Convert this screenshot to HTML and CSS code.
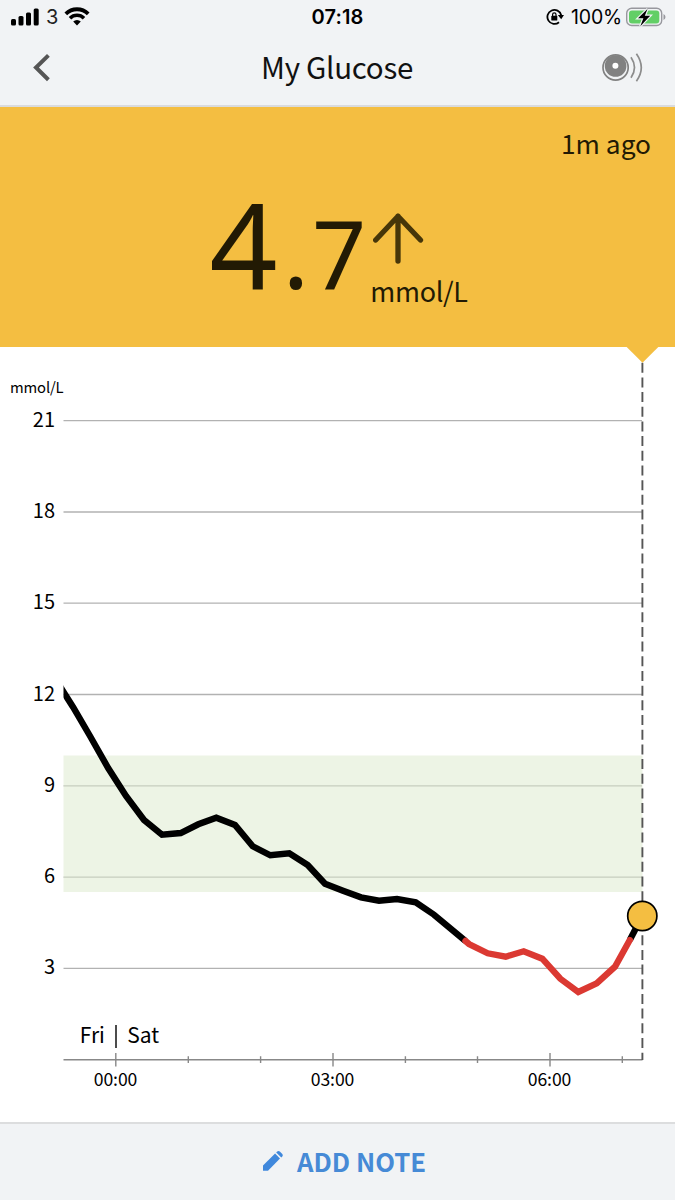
FILE: index.html
```html
<!DOCTYPE html>
<html lang="en">
	<head>
		<meta charset="utf-8">
		<meta name="viewport" content="width=device-width, initial-scale=1">
		<title>My Glucose</title>
		<link rel="stylesheet" href="styles.css">
	</head>
	<body>
		<!-- status bar -->
		<div class="status-bar">
			<div class="status-left">
				<svg class="icon-signal" width="28" height="18" viewBox="0 0 28 18">
					<rect x="0" y="11" width="5" height="6.5" rx="1.5"/>
					<rect x="7.5" y="8" width="5" height="9.5" rx="1.5"/>
					<rect x="15" y="4.5" width="5" height="13" rx="1.5"/>
					<rect x="22.7" y="0.5" width="5" height="17" rx="1.5"/>
				</svg>
				<span class="carrier">3</span>
				<svg class="icon-wifi" width="26" height="19" viewBox="0 0 26 19">
					<path d="M1.8 6.9a15.8 15.8 0 0 1 22.4 0" fill="none" stroke="#000" stroke-width="3.8"/>
					<path d="M6 11.2a9.9 9.9 0 0 1 14 0" fill="none" stroke="#000" stroke-width="3.5"/>
					<path d="M13 18.4l-3.8-3.9a5.4 5.4 0 0 1 7.6 0z"/>
				</svg>
			</div>
			<div class="status-time">07:18</div>
			<div class="status-right">
				<svg class="icon-lock" width="18" height="18" viewBox="0 0 18 18">
					<path d="M13 14.2A7 7 0 1 1 15.2 7.2" fill="none" stroke="#000" stroke-width="1.8"/>
					<path d="M11.8 7h6.2l-2.8 4.3z"/>
					<rect x="5.3" y="7.8" width="6" height="4.8" rx="0.7"/>
					<path d="M6.6 8V6.5a1.7 1.7 0 0 1 3.4 0V8" fill="none" stroke="#000" stroke-width="1.2"/>
				</svg>
				<span class="battery-text">100%</span>
				<svg class="icon-battery" width="41" height="22" viewBox="0 0 41 22">
					<rect x="0.7" y="2.2" width="35" height="17.3" rx="5" fill="none" stroke="#98989e" stroke-width="1.4"/>
					<rect x="3" y="4.4" width="30.3" height="13" rx="3" fill="#62cf66"/>
					<path d="M37.5 8v6q2-1 2-3t-2-3z" fill="#98989e"/>
					<path d="M21.5 3L12 12.3h5.4l-3.1 7.9L24.2 9.8h-5.4z" stroke="#f1f3f5" stroke-width="2.4" paint-order="stroke"/>
				</svg>
			</div>
		</div>

		<!-- nav -->
		<div class="nav">
			<svg class="icon-back" width="20" height="30" viewBox="0 0 20 30">
				<path d="M16.4 3.4L4 15.5l12.4 12.2" fill="none" stroke="#555" stroke-width="4"/>
			</svg>
			<h1 class="nav-title">My Glucose</h1>
			<svg class="icon-sensor" width="42" height="32" viewBox="0 0 42 32">
				<circle cx="14.6" cy="16.5" r="12.6" fill="none" stroke="#818181" stroke-width="1.7"/>
				<circle cx="14.6" cy="15" r="10.8" fill="#818181"/>
				<circle cx="14.4" cy="14.8" r="3" fill="#fff"/>
				<path d="M30 6.2q7 10.3 0 20.6M35.4 2.7q9.8 14 0 27.6" fill="none" stroke="#8c8c8c" stroke-width="1.7"/>
			</svg>
		</div>

		<!-- current reading -->
		<div class="reading">
			<div class="reading-age">1m ago</div>
			<div class="reading-row">
				<div class="reading-value">4<span class="reading-dot">.</span><span class="reading-decimal">7</span></div>
				<div class="reading-side">
					<svg class="icon-trend" width="52" height="52" viewBox="0 0 52 52">
						<path d="M2.7 27L25 3.2 47.5 27M25 3.2V48" fill="none" stroke="#463609" stroke-width="5.3" stroke-linecap="round" stroke-linejoin="round"/>
					</svg>
					<div class="reading-unit">mmol/L</div>
				</div>
			</div>
		</div>

		<!-- chart -->
		<svg class="chart" width="675" height="775" viewBox="0 347 675 775">
			<g class="grid">
				<path d="M63.5 420.7H642M63.5 512H642M63.5 603.2H642M63.5 694.5H642M63.5 785.8H642M63.5 877.2H642M63.5 968.3H642"/>
			</g>
			<rect class="target" x="63.5" y="755.5" width="579" height="136.5"/>
			<g class="axis">
				<path d="M63.5 1059.7H642.5M115.8 1053V1066.5M333 1053V1066.5M550 1053V1066.5"/>
				<path d="M188.3 1056.3V1063M260.6 1056.3V1063M405.4 1056.3V1063M477.5 1056.3V1063M622.3 1056.3V1063"/>
			</g>
			<text class="unit" x="10" y="393">mmol/L</text>
			<g class="y-labels">
				<text x="55" y="426.7">21</text>
				<text x="55" y="518">18</text>
				<text x="55" y="609.2">15</text>
				<text x="55" y="700.5">12</text>
				<text x="55" y="791.8">9</text>
				<text x="55" y="883">6</text>
				<text x="55" y="974.3">3</text>
			</g>
			<g class="x-labels">
				<text x="115.5" y="1086">00:00</text>
				<text x="332.5" y="1086">03:00</text>
				<text x="549.5" y="1086">06:00</text>
			</g>
			<text class="day" x="79.8" y="1042.5">Fri</text>
			<path d="M116 1025V1048" stroke="#111" stroke-width="1.5"/>
			<text class="day" x="127.3" y="1042.5">Sat</text>

			<path class="now" d="M642.4 362.7V1060"/>
			<path d="M625.7 346H659.3L642.5 362.7z" fill="#f4be41"/>

			<clipPath id="plot"><rect x="63.5" y="400" width="600" height="660"/></clipPath>
			<g class="trace" clip-path="url(#plot)">
				<polyline points="55,678 63.5,692 73,707 90,736 108.3,768.3 126,796 144,820 162,834.7 180.7,833 198.3,824.3 216.3,817.7 235,825 252.7,846.3 270.3,855.3 289.3,853.3 307.7,865 325,883.7 343,890.7 361,897.3 379,900.7 397,899 415.7,902.3 434,914.7 465.5,941"/>
				<polyline points="629.8,940 642.3,916"/>
				<polyline class="low" points="465.5,941 469,944 487.7,953.3 505.7,956.7 523.7,951.3 542.3,958.7 560.3,978.7 578.3,992 596.7,983.3 615,966.7 629.8,940"/>
			</g>
			<circle cx="642.3" cy="916" r="14.6" fill="#f4be41" stroke="#000" stroke-width="1.7"/>
		</svg>

		<!-- footer -->
		<button class="add-note">
			<svg class="icon-pencil" width="22" height="22" viewBox="0 0 22 22">
				<path d="M1 20.8V15.5L13.1 3.6l4.9 4.9L6 20.8z"/>
				<path d="M14.2 2.5l1-1q1.2-1 2.6 0l2.5 2.5q1.1 1.3 0 2.5l-1 1z"/>
			</svg>
			<span>ADD NOTE</span>
		</button>
	</body>
</html>
```
FILE: styles.css
```css
* {
	box-sizing: border-box;
}
body {
	margin: 0;
	width: 675px;
	height: 1200px;
	display: flex;
	flex-direction: column;
	background-color: #fff;
	color: #111;
	font-family: "Noto Sans CJK SC", "Noto Sans", sans-serif;
	overflow: hidden;
}

/* status bar */
.status-bar {
	display: grid;
	grid-template-columns: 1fr auto 1fr;
	align-items: center;
	height: 34px;
	padding: 0 9px 0 9px;
	background-color: #f1f3f5;
	color: #000;
	font-family: Inter, sans-serif;
	font-size: 20px;
	line-height: 34px;
}
.status-left, .status-right {
	display: flex;
	align-items: center;
}
.status-left {
	padding-left: 2px;
}
.status-right {
	justify-content: flex-end;
	margin-right: -1px;
}
.status-time {
	font-weight: 600;
	font-size: 20px;
	letter-spacing: 0.1px;
}
.carrier {
	margin: 0 6px 0 7px;
	color: #222;
}
.icon-signal {
	margin-top: -1px;
}
.icon-wifi {
	margin-top: -2px;
}
.icon-lock {
	margin-right: 7px;
}
.battery-text {
	margin-right: 4px;
	font-size: 19.5px;
	letter-spacing: -0.2px;
}

/* nav */
.nav {
	display: flex;
	justify-content: space-between;
	align-items: center;
	height: 73px;
	padding: 0 32px 5px 32px;
	background-color: #f1f3f5;
	border-bottom: 2px solid #dadbdd;
}
.nav-title {
	margin: -2px 0 0 21px;
	font-size: 29.5px;
	font-weight: 400;
	line-height: 44px;
	letter-spacing: -0.3px;
	color: #111;
}

/* current reading */
.reading {
	height: 240px;
	padding: 17px 24px 0;
	background-color: #f4be41;
	color: #221a04;
}
.reading-age {
	font-size: 26.3px;
	line-height: 38px;
	text-align: right;
}
.reading-row {
	display: flex;
	margin-top: 22px;
	padding-left: 185.5px;
}
.reading-value {
	margin-top: -21px;
	font-family: "Noto Sans", sans-serif;
	font-size: 119px;
	line-height: 160px;
	height: 160px;
}
.reading-dot {
	margin: 0 2.5px 0 5px;
	font-size: 100px;
	line-height: 1;
}
.reading-decimal {
	font-size: 95px;
	line-height: 1;
}
.reading-side {
	padding-top: 29px;
	margin-left: 4px;
}
.icon-trend {
	display: block;
	margin-left: 3px;
}
.reading-unit {
	font-size: 27px;
	line-height: 40px;
	margin-top: 6px;
	letter-spacing: -0.3px;
}

/* chart */
.chart {
	display: block;
	flex: none;
}
.target {
	fill: #dceacc;
	fill-opacity: 0.5;
}
.grid path {
	stroke: #000;
	stroke-opacity: 0.3;
	stroke-width: 1.3;
}
.axis path {
	stroke: #888;
	stroke-width: 1.4;
}
.unit {
	font-size: 14.8px;
	letter-spacing: -0.15px;
}
.y-labels {
	font-size: 20px;
	text-anchor: end;
}
.x-labels {
	font-size: 17.6px;
	letter-spacing: -0.1px;
	text-anchor: middle;
}
.day {
	font-size: 21px;
}
.now {
	stroke: #555;
	stroke-width: 1.9;
	stroke-dasharray: 10 4.68;
}
.trace polyline {
	fill: none;
	stroke: #000;
	stroke-width: 6.4;
	stroke-linejoin: miter;
}
.trace .low {
	stroke: #db3932;
	stroke-linecap: round;
}

/* footer */
.add-note {
	flex: none;
	display: flex;
	justify-content: center;
	align-items: center;
	gap: 13px;
	height: 78px;
	padding: 0 0 3px 13px;
	border: 0;
	border-top: 2px solid #dcddde;
	background-color: #f1f3f5;
	color: #468ad6;
	font-family: inherit;
	font-size: 25.7px;
	font-weight: 700;
}
.icon-pencil {
	fill: #4088dc;
}
```
